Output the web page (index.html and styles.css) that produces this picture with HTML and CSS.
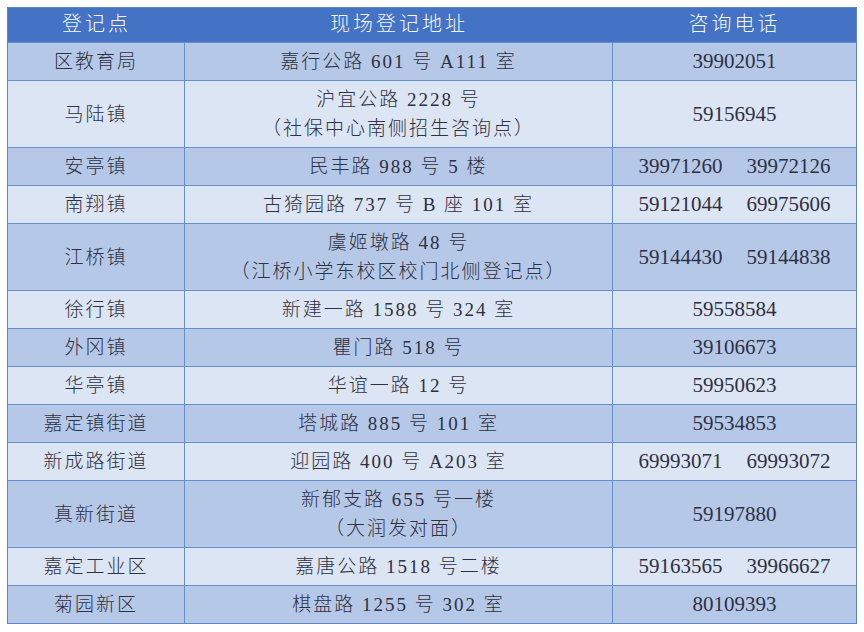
FILE: index.html
```html
<!DOCTYPE html>
<html lang="zh-CN">
<head>
<meta charset="utf-8">
<title>现场登记地址</title>
<link rel="stylesheet" href="styles.css">
</head>
<body>
<div class="sheet">
  <div class="row head">
    <div class="cell">登记点</div>
    <div class="cell">现场登记地址</div>
    <div class="cell">咨询电话</div>
  </div>
  <div class="row dark">
    <div class="cell">区教育局</div>
    <div class="cell">嘉行公路 601 号 A111 室</div>
    <div class="cell tel">39902051</div>
  </div>
  <div class="row light tall">
    <div class="cell">马陆镇</div>
    <div class="cell"><span>沪宜公路 2228 号</span><span>（社保中心南侧招生咨询点）</span></div>
    <div class="cell tel">59156945</div>
  </div>
  <div class="row dark">
    <div class="cell">安亭镇</div>
    <div class="cell">民丰路 988 号 5 楼</div>
    <div class="cell tel"><span>39971260</span><span>39972126</span></div>
  </div>
  <div class="row light">
    <div class="cell">南翔镇</div>
    <div class="cell">古猗园路 737 号 B 座 101 室</div>
    <div class="cell tel"><span>59121044</span><span>69975606</span></div>
  </div>
  <div class="row dark tall">
    <div class="cell">江桥镇</div>
    <div class="cell"><span>虞姬墩路 48 号</span><span>（江桥小学东校区校门北侧登记点）</span></div>
    <div class="cell tel"><span>59144430</span><span>59144838</span></div>
  </div>
  <div class="row light">
    <div class="cell">徐行镇</div>
    <div class="cell">新建一路 1588 号 324 室</div>
    <div class="cell tel">59558584</div>
  </div>
  <div class="row dark">
    <div class="cell">外冈镇</div>
    <div class="cell">瞿门路 518 号</div>
    <div class="cell tel">39106673</div>
  </div>
  <div class="row light">
    <div class="cell">华亭镇</div>
    <div class="cell">华谊一路 12 号</div>
    <div class="cell tel">59950623</div>
  </div>
  <div class="row dark">
    <div class="cell">嘉定镇街道</div>
    <div class="cell">塔城路 885 号 101 室</div>
    <div class="cell tel">59534853</div>
  </div>
  <div class="row light">
    <div class="cell">新成路街道</div>
    <div class="cell">迎园路 400 号 A203 室</div>
    <div class="cell tel"><span>69993071</span><span>69993072</span></div>
  </div>
  <div class="row dark tall">
    <div class="cell">真新街道</div>
    <div class="cell"><span>新郁支路 655 号一楼</span><span>（大润发对面）</span></div>
    <div class="cell tel">59197880</div>
  </div>
  <div class="row light">
    <div class="cell">嘉定工业区</div>
    <div class="cell">嘉唐公路 1518 号二楼</div>
    <div class="cell tel"><span>59163565</span><span>39966627</span></div>
  </div>
  <div class="row dark">
    <div class="cell">菊园新区</div>
    <div class="cell">棋盘路 1255 号 302 室</div>
    <div class="cell tel">80109393</div>
  </div>
</div>
</body>
</html>
```

FILE: styles.css
```css
html, body {
  margin: 0;
  padding: 0;
  background: #ffffff;
}

body {
  padding: 7px 7px 9px 7px;
  font-family: "Liberation Serif", "Noto Sans CJK SC", serif;
  color: #2f3040;
}

.sheet {
  width: 850px;
  border: 1px solid #5a86c4;
  box-sizing: border-box;
  display: flex;
  flex-direction: column;
}

.row {
  display: grid;
  grid-template-columns: 177px 428px 1fr;
  height: 38px;
  box-sizing: border-box;
  border-top: 1.5px solid #6690cc;
}

.row.tall {
  height: 67px;
}

.row.head {
  height: 34px;
  border-top: none;
  background: #4472c4;
  color: #f4f7fc;
}

.row.dark {
  background: #b5c8e8;
}

.row.light {
  background: #dce5f4;
}

.cell {
  display: flex;
  flex-direction: column;
  align-items: center;
  justify-content: center;
  font-size: 19px;
  font-weight: 300;
  letter-spacing: 2px;
  line-height: 29px;
  white-space: pre;
  border-right: 1px solid #6690cc;
}

.cell:last-child {
  border-right: none;
}

.head .cell {
  border-right: none;
  font-size: 20px;
  letter-spacing: 3px;
  padding-bottom: 2px;
}

.cell.tel {
  flex-direction: row;
  gap: 24px;
  font-size: 21px;
  letter-spacing: 0;
  font-weight: 400;
}
```
